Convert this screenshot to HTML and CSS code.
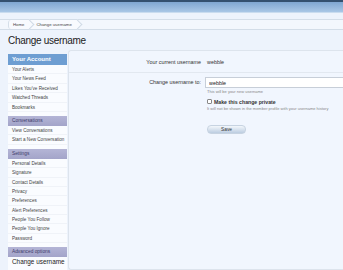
FILE: index.html
```html
<!DOCTYPE html>
<html>
<head>
    <title>Change username</title>
    <meta charset="utf-8">
    <link rel="stylesheet" href="styles.css">
</head>
<body>
<div class="header"></div>
<div class="breadBar">
    <div class="crumbs">
        <a class="crumb" href="#">Home</a>
        <a class="crumb" href="#">Change username</a>
    </div>
</div>
<h1 class="title">Change username</h1>
<div class="main">
    <div class="sidebar">
        <div class="group">
            <div class="groupTitle primary">Your Account</div>
            <ul class="links">
                <li>Your Alerts</li>
                <li>Your News Feed</li>
                <li>Likes You've Received</li>
                <li>Watched Threads</li>
                <li>Bookmarks</li>
            </ul>
        </div>
        <div class="group">
            <div class="groupTitle">Conversations</div>
            <ul class="links">
                <li>View Conversations</li>
                <li>Start a New Conversation</li>
            </ul>
        </div>
        <div class="group">
            <div class="groupTitle">Settings</div>
            <ul class="links">
                <li>Personal Details</li>
                <li>Signature</li>
                <li>Contact Details</li>
                <li>Privacy</li>
                <li>Preferences</li>
                <li>Alert Preferences</li>
                <li>People You Follow</li>
                <li>People You Ignore</li>
                <li>Password</li>
            </ul>
        </div>
        <div class="group">
            <div class="groupTitle">Advanced options</div>
            <ul class="links">
                <li class="current">Change username</li>
            </ul>
        </div>
    </div>
    <div class="panel">
        <div class="row first">
            <div class="label">Your current username</div>
            <div class="value">webble</div>
        </div>
        <div class="row">
            <div class="label labelInput">Change username to:</div>
            <div class="value">
                <input class="textInput" type="text" value="webble">
                <p class="hint">This will be your new username</p>
                <label class="check"><span class="box"></span>Make this change private</label>
                <p class="hint">It will not be shown in the member profile with your username history</p>
                <button class="save">Save</button>
            </div>
        </div>
    </div>
</div>
</body>
</html>
```

FILE: styles.css
```css
* {
    margin: 0;
    padding: 0;
    box-sizing: border-box;
}

body {
    background: #edf3fc;
    font-family: "Liberation Sans", Arial, sans-serif;
    color: #333;
    width: 343px;
    height: 270px;
    overflow: hidden;
}

ul {
    list-style: none;
}

.header {
    height: 13px;
    border-top: 2px solid #33506f;
    background: linear-gradient(#7fa6d1, #a9c7e6);
    border-bottom: 1px solid #c9dcef;
}

.breadBar {
    margin-top: 6px;
    height: 11px;
    border-top: 1px solid #d3dde8;
    border-bottom: 1px solid #d3dde8;
    background: #f3f7fd;
    padding-left: 8px;
}

.crumbs {
    display: flex;
    height: 9px;
}

.crumb {
    position: relative;
    display: block;
    font-size: 4.3px;
    line-height: 9px;
    color: #444;
    text-decoration: none;
    padding: 0 6px 0 4px;
    background: #f8fafe;
    border-left: 1px solid #d5dfe9;
}

.crumb:first-child {
    border-radius: 3px 0 0 3px;
}

.crumb::after {
    content: "";
    position: absolute;
    right: -3px;
    top: 1px;
    width: 6px;
    height: 6px;
    border-top: 1px solid #d0dae6;
    border-right: 1px solid #d0dae6;
    background: #f8fafe;
    transform: rotate(45deg);
    z-index: 1;
}

.crumb + .crumb {
    border-left: 0;
    padding-left: 6px;
}

.title {
    font-size: 10px;
    font-weight: normal;
    color: #222;
    margin: 3px 0 0 8px;
    height: 17px;
    line-height: 15px;
    letter-spacing: -0.3px;
}

.main {
    display: flex;
    padding-left: 8px;
}

.sidebar {
    width: 59px;
    margin-top: 4px;
    flex-shrink: 0;
    background: #fafcff;
}

.group {
    margin-bottom: 4px;
}

.groupTitle {
    height: 10px;
    line-height: 10px;
    font-size: 4.8px;
    padding-left: 4px;
    color: #3d3a6a;
    background: linear-gradient(#b4b5d6, #a3a4c9);
}

.groupTitle.primary {
    height: 11px;
    line-height: 11px;
    font-size: 6px;
    font-weight: bold;
    color: #fff;
    background: #6e9ed2;
}

.links li {
    height: 9.4px;
    line-height: 9.4px;
    font-size: 4.6px;
    padding-left: 4px;
    color: #444;
    border-bottom: 1px solid #f0f3f8;
}

.links li.current {
    font-size: 6.4px;
    height: 10px;
    line-height: 10px;
    color: #222;
    border-bottom: 0;
}

.panel {
    flex: 1;
    margin-left: 1px;
    height: 220px;
    background: #f1f6fe;
    border: 1px solid #dde4ed;
    border-right: 0;
    border-radius: 3px 0 0 3px;
    padding-top: 6px;
}

.row {
    display: flex;
}

.row.first {
    height: 16px;
    border-bottom: 1px solid #e2e8f0;
    margin-bottom: 4px;
}

.label {
    width: 132px;
    text-align: right;
    font-size: 5.4px;
    line-height: 10px;
    color: #333;
}

.labelInput {
    line-height: 11px;
}

.value {
    flex: 1;
    padding-left: 6px;
    font-size: 5.4px;
    line-height: 10px;
}

.textInput {
    display: block;
    width: 150px;
    height: 11px;
    margin-left: -2px;
    padding-left: 3px;
    border: 1px solid #c7ced8;
    border-right: 0;
    background: #fff;
    font-family: "Liberation Sans", Arial, sans-serif;
    font-size: 5.4px;
    color: #222;
    outline: none;
}

.hint {
    font-size: 4px;
    line-height: 6px;
    color: #888;
    margin-top: 1px;
}

.check {
    display: flex;
    align-items: center;
    margin-top: 3px;
    font-size: 5.2px;
    font-weight: bold;
    color: #333;
    height: 7px;
}

.box {
    width: 5px;
    height: 5px;
    border: 1px solid #888;
    border-radius: 1px;
    background: #fff;
    margin-right: 2px;
}

.save {
    display: block;
    margin-top: 13px;
    width: 39px;
    height: 9px;
    border: 1px solid #c7d3e1;
    border-radius: 4px;
    background: linear-gradient(#f3f7fb, #bccde1);
    font-family: "Liberation Sans", Arial, sans-serif;
    font-size: 4.8px;
    color: #333;
}
```
